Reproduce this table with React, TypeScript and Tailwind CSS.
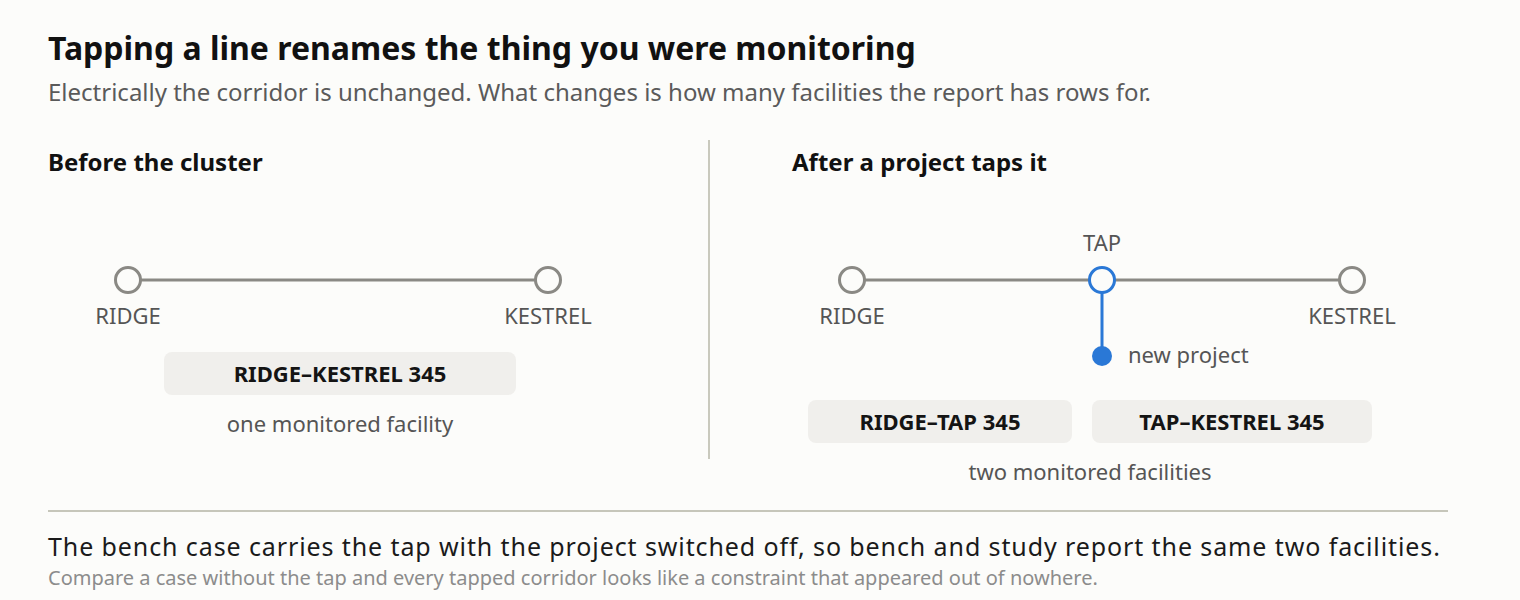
import React from 'react';

const GREY = '#8a8984';
const BLUE = '#2a78d6';

const Pill: React.FC<{ label: string; width: string }> = ({ label, width }) => (
  <div className={`${width} h-[43px] rounded-lg bg-[#f0efec] flex items-center justify-center text-[22px] font-bold text-[#141414]`}>
    {label}
  </div>
);

const Node: React.FC<{ cx: number; color?: string }> = ({ cx, color = GREY }) => (
  <circle cx={cx} cy={102} r={12.5} fill="#fcfcfa" stroke={color} strokeWidth={3} />
);

const labelProps = {
  fontFamily: '"Noto Sans", sans-serif',
  fontSize: 22,
  fill: '#555555',
  textAnchor: 'middle' as const,
};

export default function App() {
  return (
    <div className="min-h-screen bg-[#fcfcfa] px-12 pt-[28px] font-['Noto_Sans',sans-serif]">
      <h1 className="text-[32px] leading-[40px] font-bold text-[#111111]">
        Tapping a line renames the thing you were monitoring
      </h1>
      <p className="mt-[8px] text-[24px] leading-[32px] text-[#5a5a5a]">
        Electrically the corridor is unchanged. What changes is how many facilities the report has rows for.
      </p>

      <div className="mt-[32px] flex items-start">
        {/* before */}
        <div className="w-[662px] border-r-2 border-[#c9c9bd] pt-[6px] pb-[22px]">
          <div className="w-[584px]">
            <h2 className="text-[24px] leading-[32px] font-bold text-[#111111]">Before the cluster</h2>
            <svg width={584} height={174} className="block overflow-visible">
              <line x1={80} y1={102} x2={500} y2={102} stroke={GREY} strokeWidth={3} />
              <Node cx={80} />
              <Node cx={500} />
              <text x={80} y={146} {...labelProps}>RIDGE</text>
              <text x={500} y={146} {...labelProps}>KESTREL</text>
            </svg>
            <div className="flex justify-center">
              <Pill label="RIDGE–KESTREL 345" width="w-[352px]" />
            </div>
            <p className="mt-[14px] text-center text-[22px] leading-[28px] text-[#555555]">one monitored facility</p>
          </div>
        </div>

        {/* after */}
        <div className="pl-[82px] pt-[6px]">
          <div className="w-[596px]">
            <h2 className="text-[24px] leading-[32px] font-bold text-[#111111]">After a project taps it</h2>
            <svg width={596} height={222} className="block overflow-visible">
              <line x1={60} y1={102} x2={560} y2={102} stroke={GREY} strokeWidth={3} />
              <line x1={310} y1={102} x2={310} y2={178} stroke={BLUE} strokeWidth={3} />
              <Node cx={60} />
              <Node cx={560} />
              <Node cx={310} color={BLUE} />
              <circle cx={310} cy={178} r={10} fill={BLUE} />
              <text x={310} y={73} {...labelProps}>TAP</text>
              <text x={60} y={146} {...labelProps}>RIDGE</text>
              <text x={560} y={146} {...labelProps}>KESTREL</text>
              <text x={336} y={185} {...labelProps} textAnchor="start">new project</text>
            </svg>
            <div className="flex justify-center gap-5">
              <Pill label="RIDGE–TAP 345" width="w-[264px]" />
              <Pill label="TAP–KESTREL 345" width="w-[280px]" />
            </div>
            <p className="mt-[14px] text-center text-[22px] leading-[28px] text-[#555555]">two monitored facilities</p>
          </div>
        </div>
      </div>

      <div className="mt-[25px] w-[1400px] border-t-2 border-[#c6c6ba] pt-[17px]">
        <p className="text-[25px] leading-[34px] tracking-[0.9px] text-[#1a1a1a]">
          The bench case carries the tap with the project switched off, so bench and study report the same two facilities.
        </p>
        <p className="mt-[2px] text-[20px] leading-[26px] text-[#8c8c8c]">
          Compare a case without the tap and every tapped corridor looks like a constraint that appeared out of nowhere.
        </p>
      </div>
    </div>
  );
}
